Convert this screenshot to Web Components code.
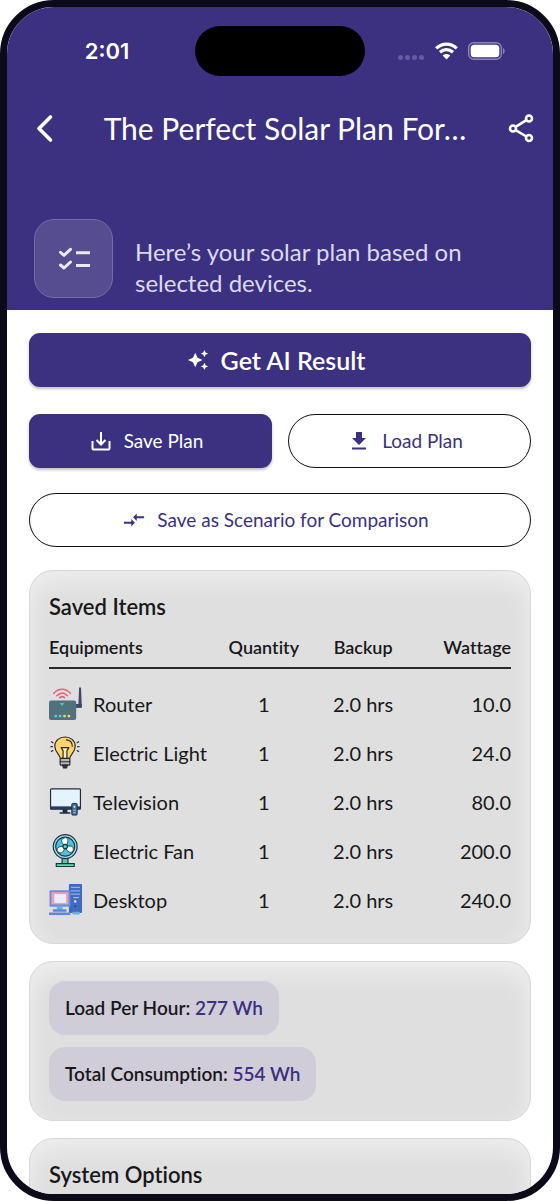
<!DOCTYPE html>
<html lang="en">
<head>
<meta charset="utf-8">
<meta name="viewport" content="width=device-width, initial-scale=1">
<title>Solar Plan</title>
<style>
:root {
  --brand: #3b3180;
  --ink: #18181b;
  --frame: #0b0a18;
}
* { box-sizing: border-box; }
body {
  margin: 0;
  background: #fff;
  color: var(--ink);
  font-family: Lato, "Liberation Sans", sans-serif;
  font-variant-ligatures: none;
}
.actions { display: grid; grid-template-columns: 1fr 1fr; gap: 25px 16px; margin: 27px 0 23px; }
.wide { grid-column: 1 / -1; }
.cards { display: flex; flex-direction: column; gap: 17px; }
</style>
</head>
<body>

<phone-frame>
  <plan-header slot="header" time="2:01" heading="The Perfect Solar Plan For…">
    Here’s your solar plan based on selected devices.
  </plan-header>

  <plan-button icon="sparkle" variant="hero">Get AI Result</plan-button>
  <div class="actions">
    <plan-button icon="save" variant="filled">Save Plan</plan-button>
    <plan-button icon="load" variant="outline">Load Plan</plan-button>
    <plan-button class="wide" icon="compare" variant="outline">Save as Scenario for Comparison</plan-button>
  </div>

  <div class="cards">
    <soft-card heading="Saved Items"><saved-items></saved-items></soft-card>
    <soft-card>
      <stat-chip label="Load Per Hour:">277 Wh</stat-chip>
      <stat-chip label="Total Consumption:">554 Wh</stat-chip>
    </soft-card>
    <soft-card heading="System Options"></soft-card>
  </div>
</phone-frame>

<script>
const ICONS = {
  sparkle: `<svg width="22" height="22" viewBox="0 0 24 24" fill="currentColor">
    <path d="M19 9l1.250-2.750L23 5l-2.750-1.250L19 1l-1.250 2.750L15 5l2.750 1.250zM19 15l-1.250 2.750L15 19l2.750 1.250L19 23l1.250-2.750L23 19l-2.750-1.250zM11.500 9.500 9 4 6.500 9.500 1 12l5.500 2.500L9 20l2.500-5.500L17 12z"/></svg>`,
  save: `<svg width="22" height="22" viewBox="0 0 22 22" fill="none" stroke="currentColor" stroke-width="2">
    <path d="M2.500 11v7.500a1 1 0 0 0 1 1h15a1 1 0 0 0 1-1V11M11 2v12M6.500 10l4.500 4.500L15.500 10"/></svg>`,
  load: `<svg width="22" height="22" viewBox="0 0 22 22" fill="currentColor">
    <path d="M8 2h6v6h4l-7 7-7-7h4zM4 17.500h14v2H4z"/></svg>`,
  compare: `<svg width="22" height="22" viewBox="0 0 24 24" fill="currentColor">
    <path d="M9.010 14H1v2h8.010v3L13 15l-3.990-4zM14.990 13v-3H23V8h-8.010V5L11 9z"/></svg>`,
  check: `<svg width="34" height="34" viewBox="0 0 34 34" fill="none" stroke="currentColor" stroke-width="3" stroke-linecap="round" stroke-linejoin="round">
    <path d="M3.500 10.300l3.500 3 6.500-6M3.500 23l3.500 3 6.500-6"/><path stroke-linecap="butt" d="M19 10.700h14M19 23.400h14"/></svg>`,
  back: `<svg width="32" height="32" viewBox="0 0 32 32" fill="none" stroke="currentColor" stroke-width="3.600" stroke-linecap="round" stroke-linejoin="round">
    <path d="M21.500 5 10 16.500 21.500 28"/></svg>`,
  share: `<svg width="32" height="32" viewBox="0 0 32 32" fill="none" stroke="currentColor" stroke-width="2.600">
    <circle cx="24" cy="6.500" r="3"/><circle cx="8" cy="16.500" r="3"/><circle cx="24" cy="26" r="3"/>
    <path d="M10.600 14.900 21.400 8.100M10.600 18.100 21.400 24.500"/></svg>`,
};

const DEVICES = {
  router: `<svg viewBox="0 0 34 34">
    <g fill="none" stroke="#e2637a" stroke-width="1.600" stroke-linecap="round">
      <path d="M5 6.500C10 1 17 1 22 6.500M8 9c4-3.800 7.500-3.800 11 0M11 11c2-1.600 3.500-1.600 5 0"/></g>
    <path d="M31 .5h2l.8 20h-3.600z" fill="#404866"/><path d="M27 17.500h6.800v4H27z" fill="#404866"/>
    <rect y="14" width="28" height="20" rx="2" fill="#51727c"/>
    <path d="M11 16.500h5l-2.500 3z" fill="#3fd0c4"/>
    <circle cx="7" cy="30" r="1.500" fill="#4ad3dc"/><circle cx="11.500" cy="30" r="1.500" fill="#4ad3dc"/>
    <circle cx="16" cy="30" r="1.500" fill="#f5d266"/><circle cx="20.500" cy="30" r="1.500" fill="#f5d266"/></svg>`,
  light: `<svg viewBox="0 0 34 34" stroke="#29272b" stroke-width="1.200" stroke-linecap="round" stroke-linejoin="round">
    <path d="M11.500 23c0-4-5.500-6-5.500-12.500C6 4.500 11 1 16.500 1S27 4.500 27 10.500C27 17 21.500 19 21.500 23z" fill="#fcd468"/>
    <path d="M18 4c4 .5 6 3 6 6.500" fill="none"/>
    <path d="M14.500 23v-8l-2-3h8l-2 3v8" fill="#fff0ae"/>
    <rect x="11.500" y="23" width="10" height="7" rx="1" fill="#b7b8c0"/><path d="M11.500 26.500h10M14 30h5l-1 3h-3z" fill="#353448"/>
    <path d="M2.500 6 4 7M2 11h1.500M2.500 16l1.500-1M30.500 6 29 7M31 11h-1.500M30.500 16l-1.500-1" fill="none"/></svg>`,
  tv: `<svg viewBox="0 0 34 34">
    <rect x="1.600" y="4" width="30.800" height="21" rx="1" fill="#e5f2ff" stroke="#252a3b" stroke-width="1.200"/>
    <path d="M1.500 22h31v3h-31z" fill="#283b5d"/><path d="M14 25h5v3h3v1.500H11V28h3z" fill="#252a3b"/>
    <rect x="23.500" y="19" width="5.500" height="12" rx="1" fill="#456e98" stroke="#1f2c43"/>
    <circle cx="26.200" cy="22.500" r="1" fill="#d9efff"/><path d="M25 26h2.500M25 28.500h2.500" stroke="#9dcbe8"/></svg>`,
  fan: `<svg viewBox="0 0 34 34" stroke="#15363b" stroke-width="1.200">
    <path d="M13.500 24h6v7h-6z" fill="#54caa6"/><path d="M7.500 30.500h18.500v3H7.500z" fill="#65dab0"/>
    <circle cx="16.700" cy="13" r="12.300" fill="#a8d3f0"/><circle cx="16.700" cy="13" r="9.800" fill="#4dc4df"/>
    <g fill="#fff" stroke-width=".8"><path d="M16 12C11.500 8 12.500 4.500 17 3.700c3.500 1 3 5 .5 8.300z"/>
    <path d="M16 12C11.500 8 12.500 4.500 17 3.700c3.500 1 3 5 .5 8.300z" transform="rotate(120 16.700 13)"/>
    <path d="M16 12C11.500 8 12.500 4.500 17 3.700c3.500 1 3 5 .5 8.300z" transform="rotate(240 16.700 13)"/></g>
    <circle cx="16.700" cy="13" r="2.300" fill="#5bd2b0"/></svg>`,
  desktop: `<svg viewBox="0 0 34 34">
    <rect x="20.500" y="1" width="13.500" height="30" rx="1" fill="#4169be"/>
    <path d="M22.500 4.500h9.500M22.500 8h9.500M22.500 11.500h9.500" stroke="#8faeee" stroke-width="1.300"/>
    <path d="M25 15h6" stroke="#e6a0c4" stroke-width="1.200"/><circle cx="27" cy="19" r="1.300" fill="#dbe8ff"/><circle cx="27" cy="24" r="1" fill="#293e8b"/>
    <rect x=".5" y="7.500" width="21.500" height="17" rx="1" fill="#6d8fde"/>
    <rect x="2.500" y="9.500" width="17.500" height="12.500" fill="#f3a1a8"/><rect x="5.500" y="11.500" width="12" height="9" fill="#e7effd"/>
    <path d="M8 24.500h6v3H8z" fill="#5ab4df"/><path d="M4 27h14v2.500H4zM0 30.500h22V33H0z" fill="#6084dc"/>
    <rect x="24" y="29.500" width="8" height="3" rx="1.500" fill="#5ab4df"/></svg>`,
};

class PhoneFrame extends HTMLElement {
  constructor() {
    super();
    this.attachShadow({ mode: "open" }).innerHTML = `
<style>
:host {
  display: flex;
  flex-direction: column;
  height: 100vh;
  border: 7px solid var(--frame);
  border-radius: 54px;
  overflow: hidden;
  background: #fff;
  box-sizing: border-box;
}
main {
  flex: 1;
  min-height: 0;
  overflow: hidden;
  padding: 23px 22px 0;
}
</style>
<slot name="header"></slot>
<main><slot></slot></main>`;
  }
}

class StatusBar extends HTMLElement {
  constructor() {
    super();
    this.attachShadow({ mode: "open" }).innerHTML = `
<style>
:host {
  display: grid;
  grid-template-columns: 1fr 170px 1fr;
  align-items: center;
  padding-top: 19px;
}
.time { padding-left: 12px; text-align: center; font: 600 22px/26px Inter, sans-serif; }
.island { height: 50px; border-radius: 25px; background: #000; }
.signals { display: flex; align-items: center; justify-content: flex-end; gap: 10px; padding-right: 48px; }
svg { display: block; }
</style>
<div class="time"><slot></slot></div>
<div class="island"></div>
<div class="signals" aria-hidden="true">
  <svg width="28" height="18" viewBox="0 0 28 18" fill="#665ca1"><circle cx="3.500" cy="15.500" r="2.500"/><circle cx="10.500" cy="15.500" r="2.500"/><circle cx="17.500" cy="15.500" r="2.500"/><circle cx="24.500" cy="15.500" r="2.500"/></svg>
  <svg width="23" height="18" viewBox="0 0 23 18" fill="none" stroke="#fff" stroke-width="3.200">
    <path d="M1.200 6.300C7 .6 16 .6 21.800 6.300M5 10.300c3.800-3.500 9.200-3.500 13 0"/><path d="M7.700 13.400c2.200-2 5.400-2 7.600 0l-3.800 4z" fill="#fff" stroke="none"/></svg>
  <svg width="37" height="18" viewBox="0 0 37 18"><rect x=".7" y=".7" width="32.600" height="16.600" rx="5" fill="none" stroke="#8d86bc" stroke-width="1.400"/><rect x="2.700" y="2.700" width="28.600" height="12.600" rx="3.500" fill="#fff"/><path d="M35 6c2.200 1 2.200 5 0 6z" fill="#8d86bc"/></svg>
</div>`;
  }
}

class PlanHeader extends HTMLElement {
  connectedCallback() {
    const root = this.attachShadow({ mode: "open" });
    root.innerHTML = `
<style>
:host { display: block; background: var(--brand); color: #fff; }
nav { display: grid; grid-template-columns: 32px 1fr 32px; align-items: center; padding: 32px 16px 0 22px; }
h1 { margin: 0; padding-left: 4px; font-size: 30px; line-height: 40px; font-weight: 400; text-align: center; }
button { display: grid; padding: 0; border: 0; background: none; color: inherit; }
svg { display: block; }
.intro { display: flex; align-items: flex-end; gap: 22px; padding: 71px 27px 12px; }
.badge {
  display: grid;
  place-items: center;
  flex: none;
  width: 79px;
  height: 79px;
  box-sizing: border-box;
  border: 1px solid #746da5;
  border-radius: 20px;
  background: #554d90;
  color: #ebe9f8;
}
p { margin: 0; max-width: 350px; font-size: 24px; line-height: 31px; color: #dcd9f0; }
</style>
<status-bar></status-bar>
<nav>
  <button type="button" aria-label="Back">${ICONS.back}</button>
  <h1></h1>
  <button type="button" aria-label="Share">${ICONS.share}</button>
</nav>
<div class="intro"><div class="badge">${ICONS.check}</div><p><slot></slot></p></div>`;
    root.querySelector("status-bar").textContent = this.getAttribute("time");
    root.querySelector("h1").textContent = this.getAttribute("heading");
  }
}

class PlanButton extends HTMLElement {
  connectedCallback() {
    this.attachShadow({ mode: "open" }).innerHTML = `
<style>
:host { display: block; }
button {
  display: flex;
  align-items: center;
  justify-content: center;
  gap: 12px;
  width: 100%;
  height: 54px;
  box-sizing: border-box;
  padding: 0 24px 0 16px;
  border: 0;
  border-radius: 11px;
  font: 400 19px/24px Lato, sans-serif;
  background: var(--brand);
  color: #fff;
  box-shadow: 0 2px 3px rgba(0, 0, 0, .25);
}
.hero { font-size: 25px; line-height: 30px; font-weight: 600; }
.outline {
  border: 1px solid #111;
  border-radius: 27px;
  background: #fff;
  color: var(--brand);
  box-shadow: none;
}
svg { flex: none; }
</style>
<button type="button" class="${this.getAttribute("variant")}">${ICONS[this.getAttribute("icon")]}<span><slot></slot></span></button>`;
  }
}

class SoftCard extends HTMLElement {
  connectedCallback() {
    const heading = this.getAttribute("heading");
    this.attachShadow({ mode: "open" }).innerHTML = `
<style>
:host {
  display: flex;
  flex-direction: column;
  align-items: flex-start;
  gap: 12px;
  padding: 19px;
  border: 1px solid #d8d8d8;
  border-radius: 24px;
  background: #dfdfdf;
  box-shadow: inset 0 10px 24px rgba(255, 255, 255, .5);
}
h2 { margin: 4px 0; font-size: 22px; line-height: 26px; font-weight: 600; }
::slotted(saved-items) { align-self: stretch; }
</style>
${heading ? `<h2>${heading}</h2>` : ""}<slot></slot>`;
  }
}

class StatChip extends HTMLElement {
  connectedCallback() {
    this.attachShadow({ mode: "open" }).innerHTML = `
<style>
:host {
  display: block;
  padding: 15px 16px;
  border-radius: 16px;
  background: #d0cdd9;
  font-size: 19px;
  line-height: 24px;
  font-weight: 600;
}
b { font-weight: 600; color: var(--brand); }
</style>
${this.getAttribute("label")} <b><slot></slot></b>`;
  }
}

class SavedItems extends HTMLElement {
  constructor() {
    super();
    const items = [
      ["router", "Router", "10.0"],
      ["light", "Electric Light", "24.0"],
      ["tv", "Television", "80.0"],
      ["fan", "Electric Fan", "200.0"],
      ["desktop", "Desktop", "240.0"],
    ];
    const rows = items.map(([icon, name, watts]) => `
<tr><td><span class="device">${DEVICES[icon]}${name}</span></td><td>1</td><td>2.0 hrs</td><td>${watts}</td></tr>`).join("");

    this.attachShadow({ mode: "open" }).innerHTML = `
<style>
:host { display: block; }
table { width: 100%; border-collapse: collapse; table-layout: fixed; }
th { padding: 0 0 9px; font-size: 18px; line-height: 22px; font-weight: 600; border-bottom: 2px solid #29282b; }
td { height: 49px; padding: 0; font-size: 20px; line-height: 24px; }
th, td { text-align: center; white-space: nowrap; }
th:first-child, td:first-child { width: 36%; text-align: left; }
th:nth-child(2) { width: 21%; }
th:nth-child(3) { width: 22%; }
th:last-child, td:last-child { text-align: right; }
tbody::before { content: ""; display: table-row; height: 11px; }
.device { display: flex; align-items: center; gap: 11px; }
svg { width: 33px; height: 33px; flex: none; }
</style>
<table>
  <thead><tr><th>Equipments</th><th>Quantity</th><th>Backup</th><th>Wattage</th></tr></thead>
  <tbody>${rows}</tbody>
</table>`;
  }
}

customElements.define("status-bar", StatusBar);
customElements.define("plan-header", PlanHeader);
customElements.define("plan-button", PlanButton);
customElements.define("saved-items", SavedItems);
customElements.define("stat-chip", StatChip);
customElements.define("soft-card", SoftCard);
customElements.define("phone-frame", PhoneFrame);
</script>
</body>
</html>
